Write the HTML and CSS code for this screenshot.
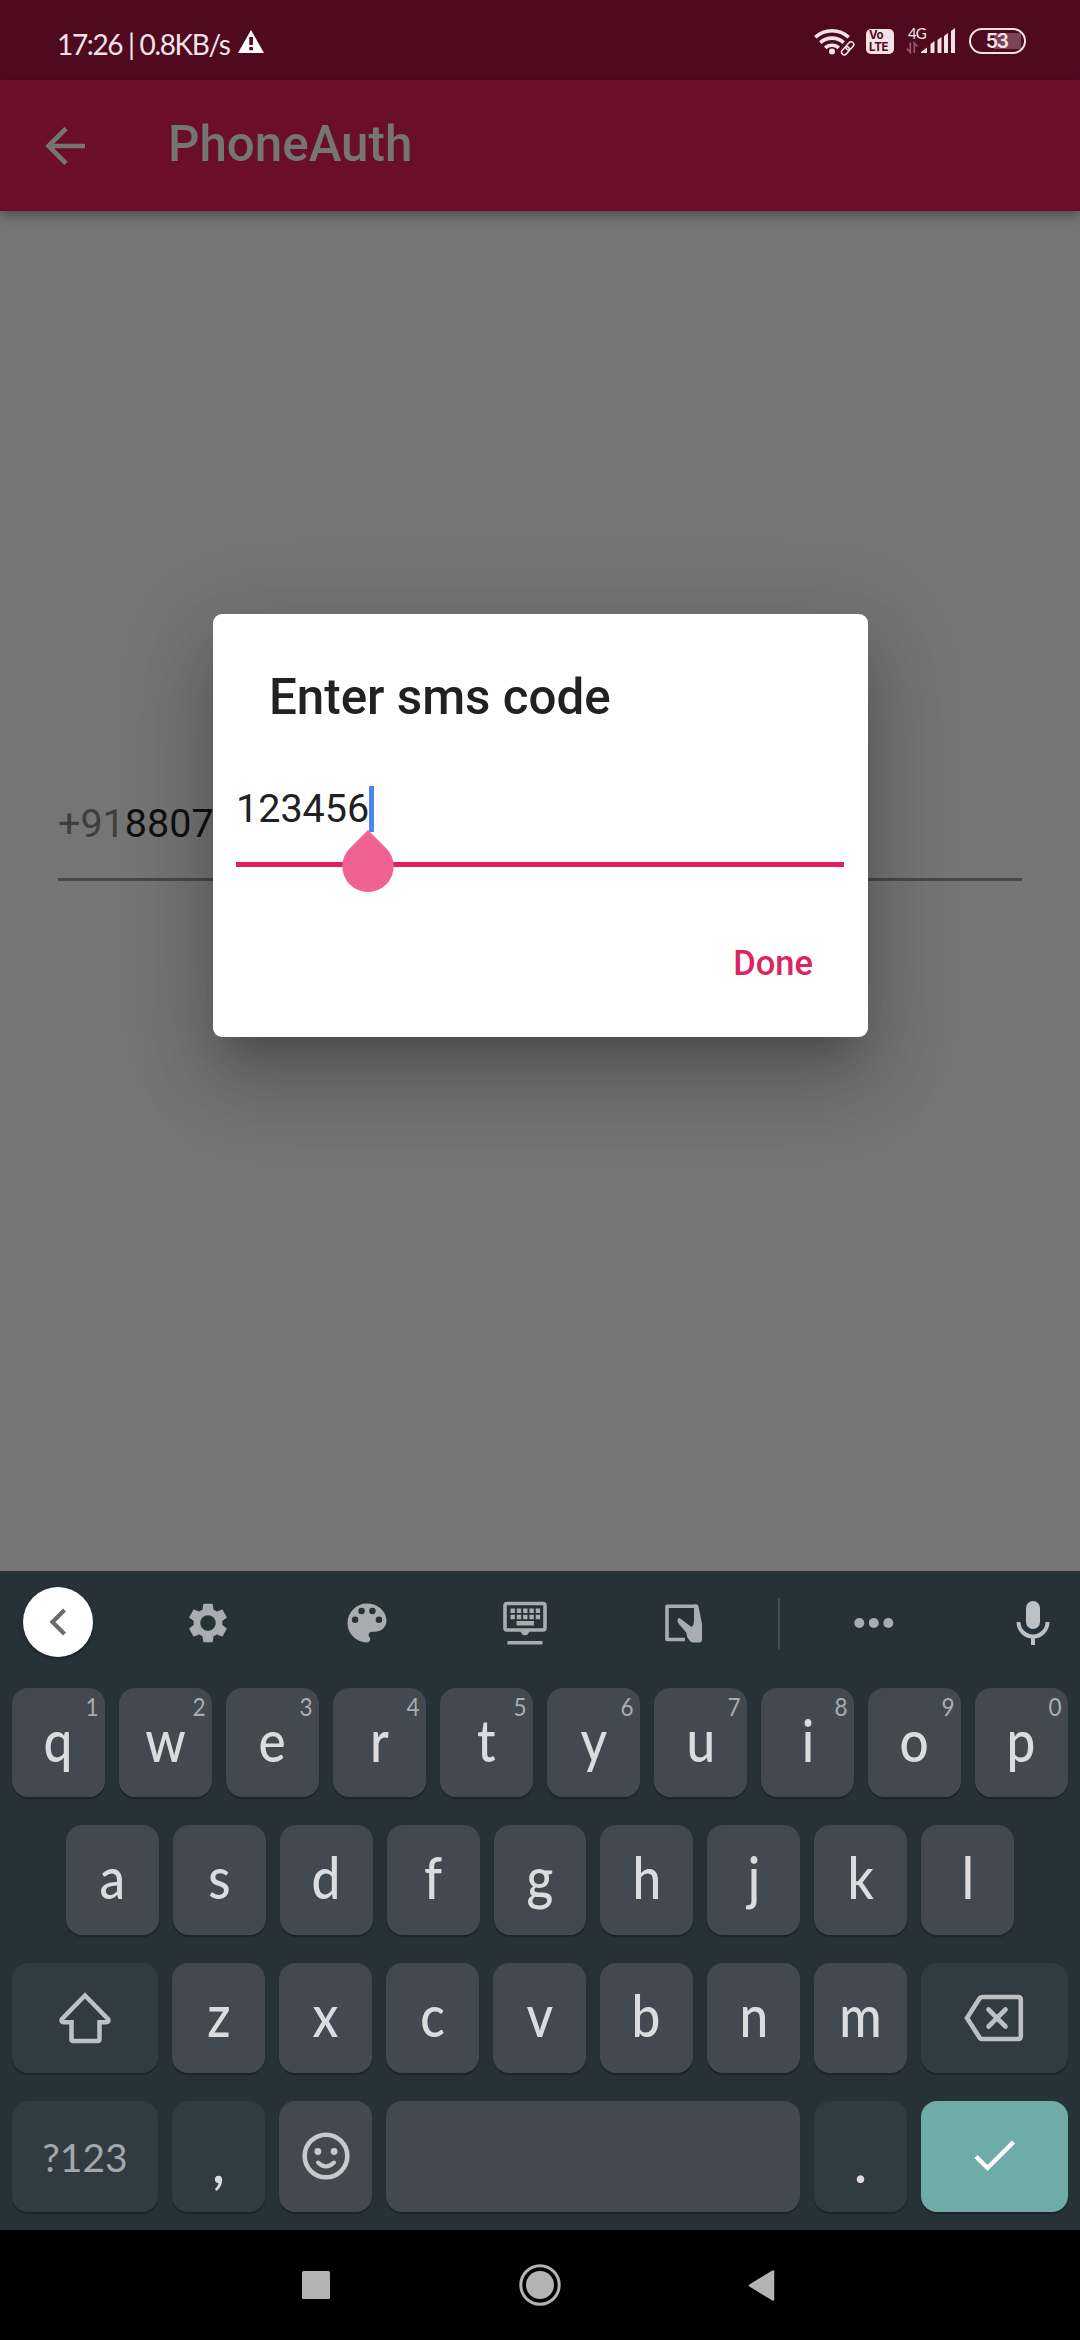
FILE: index.html
```html
<!DOCTYPE html>
<html lang="en">
<head>
<meta charset="utf-8">
<title>PhoneAuth</title>
<link rel="stylesheet" href="styles.css">
</head>
<body>
<div class="screen">
  <header class="status">
    <span class="status-text">17:26 | 0.8KB/s</span>
    <svg class="warn" width="26" height="23" viewBox="0 0 26 23"><path fill="#fff" fill-rule="evenodd" d="M13 0 26 23H0ZM11.3 7v8h3.6V7Zm0 10v3.2h3.6V17Z"/></svg>
    <div class="status-icons">
      <svg class="wifi" width="42" height="28" viewBox="0 0 42 28">
        <g fill="none" stroke="#f3e3e8" stroke-width="3.6">
          <path d="M1.3 9.3a24.5 24.5 0 0 1 33.4 0"/><path d="M6.3 14.6a17.4 17.4 0 0 1 23.4 0"/><path d="M11.2 19.9a10 10 0 0 1 13.6 0"/>
        </g>
        <circle cx="18" cy="23.6" r="3" fill="#f3e3e8"/>
        <g fill="none" stroke="#4f0a20" stroke-width="5"><path d="M27.5 27 39 13"/></g>
        <g fill="none" stroke="#f3e3e8" stroke-width="1.5" transform="rotate(-48 33.5 20.5)"><rect x="26" y="17.8" width="9" height="5.4" rx="2.7"/><rect x="32.5" y="17.8" width="9" height="5.4" rx="2.7"/></g>
      </svg>
      <div class="volte"><span>Vo</span><span>LTE</span></div>
      <div class="signal">
        <span class="net">4G</span>
        <svg width="50" height="26" viewBox="0 0 50 26">
          <g fill="none" stroke="#8c5c6b" stroke-width="1.7"><path d="M4.3 14.500v10L.8 20.500M8.300 25V15l3 3.500"/></g>
          <path fill="#f3e3e8" d="M15 25v-1l6-4.500V25ZM24.500 25V16l4-3V25ZM31.500 25V12l4-3V25ZM38 25V8l4-3V25ZM45 25V3l4-3V25Z"/>
        </svg>
      </div>
      <div class="battery"><span>53</span></div>
    </div>
  </header>

  <div class="appbar">
    <svg class="back" width="40" height="38" viewBox="0 0 40 38"><path d="M39 19H3M20 1.500 2.500 19 20 36.500" fill="none" stroke="#757575" stroke-width="4.600"/></svg>
    <h1>PhoneAuth</h1>
  </div>

  <main class="page">
    <div class="phone"><span class="prefix">+91</span><span>8807</span></div>
  </main>

  <div class="overlay">
    <section class="dialog">
      <h2>Enter sms code</h2>
      <div class="code">
        <span class="digits">123456</span><span class="caret"></span>
        <svg class="handle" width="52" height="62" viewBox="0 0 52 62"><path fill="#f06292" d="M26 0 44.200 18.200A25.700 25.700 0 1 1 7.800 18.200Z"/></svg>
      </div>
      <div class="actions"><span>Done</span></div>
    </section>
  </div>

  <section class="keyboard">
    <div class="tools">
      <div class="tool first"><span class="collapse"><svg width="18" height="28" viewBox="0 0 18 28"><path d="M15.500 2 3.500 14l12 12" fill="none" stroke="#6b6b6b" stroke-width="4.200"/></svg></span></div>
      <div class="tool"><svg width="48" height="48" viewBox="0 0 24 24"><path fill="#a7adb0" d="M19.140 12.940c.04-.3.06-.61.06-.94 0-.32-.02-.64-.07-.94l2.030-1.580c.18-.14.23-.41.12-.61l-1.920-3.320c-.12-.22-.37-.29-.59-.22l-2.390.96c-.5-.38-1.030-.7-1.620-.94L14.400 2.810c-.04-.24-.24-.41-.48-.41h-3.840c-.24 0-.43.17-.47.41L9.250 5.350C8.660 5.590 8.120 5.920 7.630 6.290L5.240 5.330c-.22-.08-.47 0-.59.22L2.740 8.870c-.12.21-.08.47.12.61l2.030 1.580c-.05.3-.09.63-.09.94s.02.64.07.94l-2.030 1.580c-.18.14-.23.41-.12.61l1.920 3.320c.12.22.37.29.59.22l2.390-.96c.5.38 1.030.7 1.620.94l.36 2.540c.05.24.24.41.48.41h3.840c.24 0 .44-.17.47-.41l.36-2.540c.59-.24 1.130-.56 1.620-.94l2.390.96c.22.08.47 0 .59-.22l1.920-3.320c.12-.22.07-.47-.12-.61ZM12 15.900a3.900 3.900 0 1 1 0-7.800 3.900 3.900 0 0 1 0 7.800Z"/></svg></div>
      <div class="tool"><svg width="52" height="52" viewBox="0 0 24 24"><path fill="#a7adb0" d="M12 3a9 9 0 0 0 0 18c.83 0 1.500-.67 1.500-1.500 0-.39-.15-.74-.39-1.010-.23-.26-.38-.61-.38-.99 0-.83.67-1.500 1.500-1.500H16c2.760 0 5-2.240 5-5 0-4.420-4.030-8-9-8Zm-5.500 9a1.500 1.500 0 1 1 0-3 1.500 1.500 0 0 1 0 3Zm3-4a1.500 1.500 0 1 1 0-3 1.500 1.500 0 0 1 0 3Zm5 0a1.500 1.500 0 1 1 0-3 1.500 1.500 0 0 1 0 3Zm3 4a1.500 1.500 0 1 1 0-3 1.500 1.500 0 0 1 0 3Z"/></svg></div>
      <div class="tool"><svg width="44" height="44" viewBox="0 0 44 44"><rect x="2" y="2.500" width="40" height="26.500" rx="2" fill="none" stroke="#a7adb0" stroke-width="3.600"/><path fill="#a7adb0" d="M7.500 7.500h4.400v4.400H7.500zM13.800 7.500h4.400v4.400h-4.400zM20.100 7.500h4.400v4.400h-4.400zM26.400 7.500h4.400v4.400h-4.400zM32.700 7.500h4.400v4.400h-4.400zM7.500 13.800h4.400v4.400H7.500zM13.800 13.800h4.400v4.400h-4.400zM20.100 13.800h4.400v4.400h-4.400zM26.400 13.800h4.400v4.400h-4.400zM32.700 13.800h4.400v4.400h-4.400zM13.500 20h17.500v4.400H13.500zM17.500 30a4.700 6 0 0 0 9 0zM4.500 40h35v3.500h-35z"/></svg></div>
      <div class="tool"><svg width="37" height="39" viewBox="0 0 37 39"><path d="M20 35.500H2V2.200h29v18" fill="none" stroke="#a7adb0" stroke-width="3.600" stroke-linejoin="round"/><path fill="#a7adb0" d="M29 .5h2.500q1.500 0 2 1.500l3.500 18v15.500q0 3-3 3h-6q-2 0-3.500-2-3-3.500-3.300-8L13.500 19.500q-1.800-2.500-.5-5 1-1 2.500.3l11 8.200q2.500-2 2.500-6Z"/></svg></div>
      <div class="tool"><span class="divider"></span></div>
      <div class="tool"><svg width="40" height="12" viewBox="0 0 40 12"><g fill="#a7adb0"><circle cx="5.300" cy="6" r="5"/><circle cx="19.800" cy="6" r="5"/><circle cx="34.300" cy="6" r="5"/></g></svg></div>
      <div class="tool mic"><svg width="34" height="46" viewBox="0 0 34 46"><rect x="10" y="1" width="14" height="28" rx="7" fill="#bcc1c3"/><path d="M2.500 22a14.500 14.500 0 0 0 29 0M17 36v9" fill="none" stroke="#bcc1c3" stroke-width="4"/></svg></div>
    </div>
    <div class="keys row1">
      <div class="key"><i>1</i><b>q</b></div><div class="key"><i>2</i><b>w</b></div><div class="key"><i>3</i><b>e</b></div><div class="key"><i>4</i><b>r</b></div><div class="key"><i>5</i><b>t</b></div><div class="key"><i>6</i><b>y</b></div><div class="key"><i>7</i><b>u</b></div><div class="key"><i>8</i><b>i</b></div><div class="key"><i>9</i><b>o</b></div><div class="key"><i>0</i><b>p</b></div>
    </div>
    <div class="keys row2">
      <div class="key"><b>a</b></div><div class="key"><b>s</b></div><div class="key"><b>d</b></div><div class="key"><b>f</b></div><div class="key"><b>g</b></div><div class="key"><b>h</b></div><div class="key"><b>j</b></div><div class="key"><b>k</b></div><div class="key"><b>l</b></div>
    </div>
    <div class="keys row3">
      <div class="key dark"><svg width="54" height="52" viewBox="0 0 54 52"><path d="M27 3.500 50 27q1.500 3-2 3.300h-6.500V47q0 2-2 2H15.500q-2 0-2-2V30.300H6q-3.500-.3-2-3.300Z" fill="none" stroke="#bcc1c3" stroke-width="4.600"/></svg></div>
      <div class="key"><b>z</b></div><div class="key"><b>x</b></div><div class="key"><b>c</b></div><div class="key"><b>v</b></div><div class="key"><b>b</b></div><div class="key"><b>n</b></div><div class="key"><b>m</b></div>
      <div class="key dark"><svg class="erase" width="60" height="48" viewBox="0 0 60 48"><path d="M18 3h36q2.800 0 2.800 2.800v36.400q0 2.800-2.800 2.800H18q-1.500 0-2.500-1.500L3 24 15.500 4.500Q16.500 3 18 3Z" fill="none" stroke="#bcc1c3" stroke-width="4.600"/><path d="m24.500 15.500 17 17m0-17-17 17" stroke="#bcc1c3" stroke-width="4.600" stroke-linecap="round"/></svg></div>
    </div>
    <div class="keys row4">
      <div class="key dark"><span class="sym">?123</span></div>
      <div class="key dark punct"><b>,</b></div>
      <div class="key smile"><svg width="48" height="50" viewBox="0 0 48 50"><circle cx="24" cy="25" r="21.300" fill="none" stroke="#c7cacd" stroke-width="4.600"/><circle cx="15.900" cy="20.500" r="3.400" fill="#c7cacd"/><circle cx="32.100" cy="20.500" r="3.400" fill="#c7cacd"/><path d="M16 31.500q8 8 16 0" fill="none" stroke="#c7cacd" stroke-width="4" stroke-linecap="round"/></svg></div>
      <div class="key"></div>
      <div class="key dark punct"><b>.</b></div>
      <div class="key enter"><svg width="42" height="34" viewBox="0 0 42 34"><path d="m2 17.500 11.500 11.500L39.500 3" fill="none" stroke="#fff" stroke-width="4.400"/></svg></div>
    </div>
  </section>

  <nav class="nav">
    <svg width="28" height="28" viewBox="0 0 28 28"><rect width="28" height="28" rx="1.500" fill="#b3b3b3"/></svg>
    <svg width="42" height="42" viewBox="0 0 42 42"><circle cx="21" cy="21" r="19.200" fill="none" stroke="#b3b3b3" stroke-width="3"/><circle cx="21" cy="21" r="14" fill="#b3b3b3"/></svg>
    <svg width="27" height="31" viewBox="0 0 27 31"><path d="M2 15.500 25 1.500v28Z" fill="#b3b3b3" stroke="#b3b3b3" stroke-width="2.500" stroke-linejoin="round"/></svg>
  </nav>
</div>
</body>
</html>
```
FILE: styles.css
```css
* { box-sizing: border-box; }
body { margin: 0; background: #757575; font-family: Roboto, sans-serif; }
svg { display: block; flex: none; }
h1, h2 { margin: 0; font-weight: 500; white-space: nowrap; }

.screen {
  position: relative;
  display: grid;
  grid-template-rows: 80px 131px 1360px 659px 110px;
  width: 1080px;
  height: 2340px;
  overflow: hidden;
}

/* status bar */
.status { display: flex; align-items: flex-start; padding-left: 57px; background: #4f0a20; color: #f3e3e8; }
.status-text { width: 181px; padding-top: 26px; font: 400 28px/36px Lato, sans-serif; letter-spacing: -1.350px; white-space: nowrap; }
.warn { margin-top: 30px; }
.status-icons { display: flex; margin-left: 550px; padding-top: 28px; }
.volte {
  display: flex; flex-direction: column; width: 28px; height: 25px; margin: 1px 12px 0 10px; padding: 1px 0 0 3px;
  border-radius: 5px; background: #f3e3e8; color: #4f0a20; font: 700 11.500px/11.500px Inter, sans-serif; letter-spacing: -.3px;
}
.signal { position: relative; width: 50px; }
.net { position: absolute; left: 2px; top: -3px; font: 400 15px/16px Lato, sans-serif; letter-spacing: -1px; }
.battery {
  width: 57px; height: 26px; margin-left: 13px; padding-right: 2px; border: 2.500px solid #f3e3e8; border-radius: 13px;
  background: linear-gradient(#7b4456, #7b4456) 23px 2.500px / 27px 16px no-repeat;
  font: 600 19.500px/22px Inter, sans-serif; text-align: center; letter-spacing: -1.500px;
}

/* app bar */
.appbar {
  position: relative; z-index: 1; display: flex; align-items: center; padding-left: 46px;
  background: #6a0e2a; box-shadow: 0 4px 10px rgba(0, 0, 0, .35); color: #757575;
}
.appbar h1 { margin: -4px 0 0 82px; font-size: 49.300px; line-height: 60px; }

.page { padding: 587px 58px 0; }
.phone { height: 82.500px; border-bottom: 3px solid #484848; font-size: 39.500px; line-height: 51px; color: #101010; }
.prefix { color: #3e3e3e; }

/* dialog */
.overlay { position: absolute; inset: 80px 0 769px; z-index: 2; display: grid; place-items: center; }
.dialog {
  width: 655px; height: 423px; padding: 53px 23.500px 0; border-radius: 9px; background: #fff; color: #212121;
  box-shadow: 0 26px 36px -16px rgba(0, 0, 0, .2), 0 50px 80px 4px rgba(0, 0, 0, .14), 0 20px 90px 12px rgba(0, 0, 0, .12);
}
.dialog h2 { padding-left: 33px; font-size: 49.300px; line-height: 60px; }
.code { position: relative; display: flex; height: 81px; margin-top: 58.500px; border-bottom: 5px solid #e0215f; }
.digits { width: 133px; font-size: 39.500px; line-height: 46px; }
.caret { width: 5px; height: 46.500px; background: #4a86ee; }
.handle { position: absolute; left: 106px; top: 44px; }
.actions { display: flex; justify-content: flex-end; padding: 75px 31px 0 0; color: #dd2460; font-size: 34.500px; font-weight: 500; line-height: 42px; }

/* keyboard */
.keyboard { background: #273238; }
.tools {
  display: grid; grid-template-columns: 128px 159px 159px 158px 159px 31px 159px 127px;
  height: 117px; padding-bottom: 13px;
}
.tool { display: flex; align-items: center; justify-content: center; }
.first { justify-content: flex-start; padding: 0 0 2px 23px; }
.mic { padding-left: 33px; }
.collapse {
  display: flex; align-items: center; width: 70px; height: 70px; padding-left: 26px; border-radius: 50%;
  background: #fff; box-shadow: 0 2px 3px rgba(0, 0, 0, .35);
}
.divider { width: 2px; height: 51px; background: #424c51; }
.keys { display: grid; grid-template-rows: 100%; column-gap: 14px; padding: 0 12px; margin-bottom: 28px; height: 110px; }
.row1 { grid-template-columns: repeat(10, 1fr); height: 109px; }
.row2 { grid-template-columns: repeat(9, 1fr); padding: 0 66px; }
.row3 { grid-template-columns: 146px repeat(7, 1fr) 147px; }
.row4 { grid-template-columns: 146px 93px 93px 1fr 93px 147px; margin: 0; height: 111px; }
.key {
  position: relative; display: flex; align-items: center; justify-content: center; min-width: 0;
  border-radius: 16px; background: #424950; box-shadow: 0 2px 1px #1c252b; color: #dadcde;
}
.key b { align-self: flex-start; font: 500 57px/105px Lato, sans-serif; transform: scaleX(.9); }
.key.punct b { transform: translateY(8px); }
.key i { position: absolute; right: 6px; top: 4px; font: 400 25px/29px Lato, sans-serif; color: #a9adb1; transform: scaleX(.9); transform-origin: right; }
.dark { background: #313b42; }
.enter { background: #6faca8; }
.enter svg { margin-bottom: 2px; }
.smile svg { margin-bottom: 2px; }
.erase { margin-right: 2px; }
.sym { font: 400 39px/50px Lato, sans-serif; color: #a3a8ab; }

/* system navigation */
.nav { display: grid; grid-template-columns: 302px 217px 229px 1fr; align-items: center; background: #000; }
.nav svg:first-child { grid-column: 2; }
```
